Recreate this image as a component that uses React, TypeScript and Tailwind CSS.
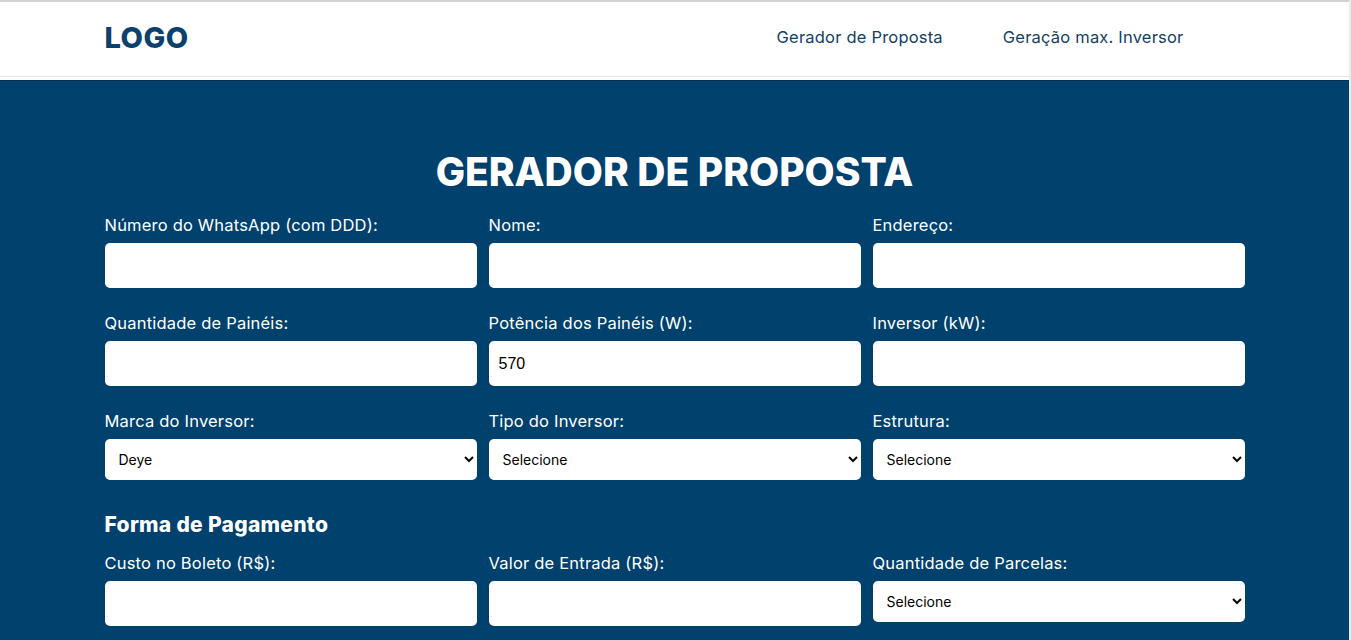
import { useState } from 'react';

const font = { fontFamily: 'Inter, "Noto Sans", sans-serif' };

function Field({ label, value }: { label: string; value?: string }) {
  const [v, setV] = useState(value || '');
  return (
    <div className="flex flex-col">
      <label className="text-white text-[16.5px] tracking-[0.2px] leading-[24px] mb-[6px]">{label}</label>
      <input
        value={v}
        onChange={(e) => setV(e.target.value)}
        className="h-[45px] bg-white rounded-[5px] px-[10px] text-[16px] text-black outline-none"
        style={{ fontFamily: '"Liberation Sans", Arial, sans-serif' }}
      />
    </div>
  );
}

function SelectField({ label, options }: { label: string; options: string[] }) {
  return (
    <div className="flex flex-col">
      <label className="text-white text-[16.5px] tracking-[0.2px] leading-[24px] mb-[6px]">{label}</label>
      <select className="h-[41px] bg-white rounded-[5px] pl-[10px] pr-[6px] text-[14px] text-black outline-none">
        {options.map((o) => (
          <option key={o}>{o}</option>
        ))}
      </select>
    </div>
  );
}

export default function App() {
  return (
    <div className="min-h-screen bg-white border-r-[2px] border-r-[#ececec]" style={font}>
      {/* cabeçalho */}
      <header className="h-[77px] bg-white border-t-[2px] border-t-[#d2d2d2] border-b border-b-[#e6e6e6]">
        <div className="max-w-[1140px] mx-auto h-full flex items-center justify-between pb-[3px]">
          <div className="text-[29px] font-extrabold text-[#0b416b] tracking-[0.5px]">LOGO</div>
          <nav className="flex gap-[60px] pr-[61px] text-[16.5px] tracking-[0.2px] text-[#123f63]">
            <a href="#">Gerador de Proposta</a>
            <a href="#">Geração max. Inversor</a>
          </nav>
        </div>
      </header>

      <main className="mt-[3px] bg-[#01416d] border-t border-t-[#012f50] pt-[67px] pb-[40px]">
        <div className="max-w-[1140px] mx-auto">
          <h1 className="text-white text-center text-[39px] leading-[48px] font-extrabold">GERADOR DE PROPOSTA</h1>

          <div className="grid grid-cols-3 gap-x-[12px] gap-y-[23px] mt-[17px]">
            <Field label="Número do WhatsApp (com DDD):" />
            <Field label="Nome:" />
            <Field label="Endereço:" />
            <Field label="Quantidade de Painéis:" />
            <Field label="Potência dos Painéis (W):" value="570" />
            <Field label="Inversor (kW):" />
            <SelectField label="Marca do Inversor:" options={['Deye', 'Growatt', 'Solis', 'Sungrow']} />
            <SelectField label="Tipo do Inversor:" options={['Selecione', 'String', 'Microinversor', 'Híbrido']} />
            <SelectField label="Estrutura:" options={['Selecione', 'Telhado Cerâmico', 'Fibrocimento', 'Metálico', 'Solo']} />
          </div>

          <h2 className="text-white text-[21px] tracking-[0.3px] leading-[30px] font-extrabold mt-[30px]">Forma de Pagamento</h2>

          <div className="grid grid-cols-3 gap-x-[12px] gap-y-[23px] mt-[11px]">
            <Field label="Custo no Boleto (R$):" />
            <Field label="Valor de Entrada (R$):" />
            <SelectField label="Quantidade de Parcelas:" options={['Selecione', '12x', '24x', '36x', '48x', '60x']} />
          </div>
        </div>
      </main>
    </div>
  );
}
